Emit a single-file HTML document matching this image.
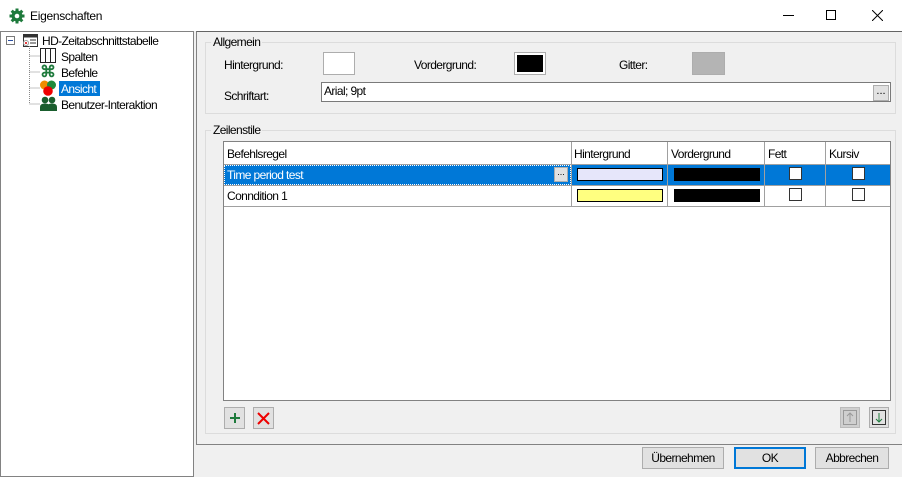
<!DOCTYPE html>
<html><head><meta charset="utf-8"><style>
*{box-sizing:border-box;margin:0;padding:0}
body{width:902px;height:477px;background:#f0f0f0;font-family:"Liberation Sans",sans-serif;font-size:12px;color:#000;position:relative;overflow:hidden}
.a{position:absolute}
.t{position:absolute;white-space:nowrap;font-size:12px;letter-spacing:-0.6px}
.btn{position:absolute;background:#e1e1e1;border:1px solid #adadad;text-align:center;line-height:20px;font-size:12px;letter-spacing:-0.6px}
.cb{position:absolute;width:13px;height:13px;background:#fff;border:1px solid #333}
</style></head><body>
<div class="a" style="left:0;top:0;width:902px;height:31px;background:#fff"></div>
<svg class="a" style="left:9px;top:8px" width="16" height="16" viewBox="0 0 16 16"><g fill="#1e7a3c"><circle cx="8" cy="8" r="5.5"/><rect x="6.5" y="0.5" width="3" height="15"/><rect x="0.5" y="6.5" width="15" height="3"/><rect x="6.5" y="0.5" width="3" height="15" transform="rotate(45 8 8)"/><rect x="6.5" y="0.5" width="3" height="15" transform="rotate(-45 8 8)"/></g><circle cx="8" cy="8" r="2.3" fill="#fff"/></svg>
<div class="t" style="left:30px;top:9px;letter-spacing:-0.3px">Eigenschaften</div>
<div class="a" style="left:783px;top:15px;width:11px;height:1px;background:#000"></div>
<div class="a" style="left:826px;top:10px;width:10px;height:10px;border:1px solid #000"></div>
<svg class="a" style="left:872px;top:10px" width="11" height="11"><path d="M0 0L11 11M11 0L0 11" stroke="#000" stroke-width="1"/></svg>
<div class="a" style="left:0;top:31px;width:194px;height:446px;background:#fff;border:1px solid #828282"></div>
<div class="a" style="left:196px;top:31px;width:706px;height:414px;border:1px solid #828282;border-right:none;border-top:1px solid #646464"></div>
<div class="a" style="left:196px;top:444px;width:706px;height:1px;background:#828282"></div>
<!-- tree -->
<div class="a" style="left:6px;top:36px;width:9px;height:9px;border:1px solid #7a7a7a;background:#fff"></div>
<div class="a" style="left:8px;top:40px;width:5px;height:1px;background:#2a4ea0"></div>
<svg class="a" style="left:22px;top:33px" width="17" height="15"><rect x="1.5" y="1.5" width="14" height="12" fill="#fff" stroke="#333"/><rect x="1.5" y="1.5" width="14" height="3" fill="#333"/><line x1="8" y1="7" x2="14" y2="7" stroke="#333"/><line x1="8" y1="10" x2="14" y2="10" stroke="#333"/><circle cx="4" cy="10" r="2.5" fill="#fff" stroke="#999"/><circle cx="4" cy="10" r="1" fill="#d00"/></svg>
<div class="t" style="left:42px;top:34px">HD-Zeitabschnittstabelle</div>
<svg class="a" style="left:28px;top:46px" width="14" height="60"><path d="M1.5 0V58M1.5 10H12M1.5 26H12M1.5 42H12M1.5 58H12" stroke="#888" stroke-dasharray="1 1" fill="none"/></svg>
<svg class="a" style="left:40px;top:48px" width="16" height="15"><rect x="0.5" y="0.5" width="15" height="14" fill="#fff" stroke="#222"/><path d="M5.5 0V15M10.5 0V15" stroke="#222"/></svg>
<div class="t" style="left:61px;top:50px">Spalten</div>
<div class="t" style="left:40px;top:62px;color:#1e7a3c;font-size:16px;font-weight:bold">⌘</div>
<div class="t" style="left:61px;top:66px">Befehle</div>
<svg class="a" style="left:40px;top:80px" width="16" height="16"><circle cx="4.5" cy="5" r="4.5" fill="#f08c00"/><circle cx="11.5" cy="5" r="4.5" fill="#1e8a3c"/><circle cx="8" cy="11" r="4.8" fill="#e00"/></svg>
<div class="a" style="left:59px;top:81px;width:41px;height:15px;background:#0078d7"></div>
<div class="t" style="left:61px;top:82px;color:#fff">Ansicht</div>
<svg class="a" style="left:40px;top:96px" width="17" height="15"><circle cx="5" cy="4" r="3.3" fill="#1a5e2e"/><circle cx="12" cy="4" r="3.3" fill="#1a5e2e"/><path d="M0 15V11Q0 7.5 5 7.5Q10 7.5 10 11V15ZM7 15V11Q7 7.5 12 7.5Q17 7.5 17 11V15Z" fill="#1a5e2e"/></svg>
<div class="t" style="left:61px;top:98px">Benutzer-Interaktion</div>
<!-- Allgemein -->
<div class="a" style="left:205px;top:42px;width:691px;height:72px;border:1px solid #dcdcdc"></div>
<div class="t" style="left:211px;top:35px;background:#f0f0f0;padding:0 2px">Allgemein</div>
<div class="t" style="left:224px;top:58px">Hintergrund:</div>
<div class="a" style="left:323px;top:52px;width:32px;height:23px;border:1px solid #adadad;background:#fff"></div>
<div class="t" style="left:414px;top:58px">Vordergrund:</div>
<div class="a" style="left:514px;top:52px;width:32px;height:23px;border:1px solid #adadad;background:#fff;padding:2px"><div style="width:100%;height:100%;background:#000"></div></div>
<div class="t" style="left:619px;top:58px">Gitter:</div>
<div class="a" style="left:692px;top:52px;width:33px;height:23px;border:1px solid #adadad;background:#b4b4b4"></div>
<div class="t" style="left:224px;top:89px">Schriftart:</div>
<div class="a" style="left:321px;top:82px;width:570px;height:20px;border:1px solid #7a7a7a;background:#fff"></div>
<div class="t" style="left:324px;top:84px">Arial; 9pt</div>
<div class="a" style="left:873px;top:85px;width:16px;height:16px;background:#e1e1e1;border:1px solid #adadad;font-size:11px;text-align:center;line-height:10px">...</div>
<!-- Zeilenstile -->
<div class="a" style="left:205px;top:130px;width:691px;height:304px;border:1px solid #dcdcdc"></div>
<div class="t" style="left:211px;top:123px;background:#f0f0f0;padding:0 2px">Zeilenstile</div>
<div class="a" style="left:223px;top:141px;width:668px;height:260px;border:1px solid #828282;background:#fff"></div>
<div class="a" style="left:224px;top:164px;width:666px;height:1px;background:#a0a0a0"></div>
<div class="a" style="left:224px;top:165px;width:666px;height:20px;background:#0078d7"></div>
<div class="a" style="left:224px;top:185px;width:666px;height:1px;background:#a0a0a0"></div>
<div class="a" style="left:224px;top:206px;width:666px;height:1px;background:#a0a0a0"></div>
<div class="a" style="left:571px;top:142px;width:1px;height:65px;background:#a0a0a0"></div>
<div class="a" style="left:667px;top:142px;width:1px;height:65px;background:#a0a0a0"></div>
<div class="a" style="left:764px;top:142px;width:1px;height:65px;background:#a0a0a0"></div>
<div class="a" style="left:825px;top:142px;width:1px;height:65px;background:#a0a0a0"></div>
<div class="t" style="left:227px;top:147px">Befehlsregel</div>
<div class="t" style="left:574px;top:147px">Hintergrund</div>
<div class="t" style="left:671px;top:147px">Vordergrund</div>
<div class="t" style="left:768px;top:147px">Fett</div>
<div class="t" style="left:829px;top:147px">Kursiv</div>
<div class="a" style="left:224px;top:165px;width:347px;height:20px;border:1px dotted #fff"></div>
<div class="t" style="left:227px;top:168px;color:#fff">Time period test</div>
<div class="a" style="left:554px;top:167px;width:14px;height:15px;background:#e1e1e1;border:1px solid #adadad;font-size:9px;text-align:center;line-height:9px">...</div>
<div class="a" style="left:577px;top:168px;width:86px;height:13px;background:#e6e6fa;border:1px solid #000"></div>
<div class="a" style="left:674px;top:168px;width:86px;height:13px;background:#000"></div>
<div class="cb" style="left:789px;top:167px"></div>
<div class="cb" style="left:852px;top:167px"></div>
<div class="t" style="left:227px;top:189px">Conndition 1</div>
<div class="a" style="left:577px;top:189px;width:86px;height:13px;background:#ffff80;border:1px solid #000"></div>
<div class="a" style="left:674px;top:189px;width:86px;height:13px;background:#000"></div>
<div class="cb" style="left:789px;top:188px"></div>
<div class="cb" style="left:852px;top:188px"></div>
<!-- small buttons -->
<div class="a" style="left:224px;top:407px;width:21px;height:22px;background:#e1e1e1;border:1px solid #adadad"></div>
<svg class="a" style="left:229px;top:412px" width="12" height="12"><path d="M6 1V11M1 6H11" stroke="#1e7a3c" stroke-width="2"/></svg>
<div class="a" style="left:253px;top:407px;width:21px;height:22px;background:#e1e1e1;border:1px solid #adadad"></div>
<svg class="a" style="left:257px;top:412px" width="13" height="13"><path d="M1 1L12 12M12 1L1 12" stroke="#e00" stroke-width="2"/></svg>
<div class="a" style="left:840px;top:407px;width:20px;height:21px;background:#cfcfcf;border:1px solid #bbb"></div>
<svg class="a" style="left:843px;top:410px" width="14" height="15"><rect x="0.5" y="0.5" width="13" height="14" fill="none" stroke="#999"/><path d="M7 3V12M4 6L7 3L10 6" stroke="#999" fill="none"/></svg>
<div class="a" style="left:869px;top:407px;width:20px;height:21px;background:#e1e1e1;border:1px solid #adadad"></div>
<svg class="a" style="left:872px;top:410px" width="14" height="15"><rect x="0.5" y="0.5" width="13" height="14" fill="none" stroke="#333"/><path d="M7 3V12M4 9L7 12L10 9" stroke="#1e7a3c" fill="none"/></svg>
<!-- bottom buttons -->
<div class="btn" style="left:642px;top:447px;width:82px;height:22px">Übernehmen</div>
<div class="btn" style="left:734px;top:447px;width:72px;height:22px;border:2px solid #0078d7;line-height:18px">OK</div>
<div class="btn" style="left:815px;top:447px;width:74px;height:22px">Abbrechen</div>
</body></html>
